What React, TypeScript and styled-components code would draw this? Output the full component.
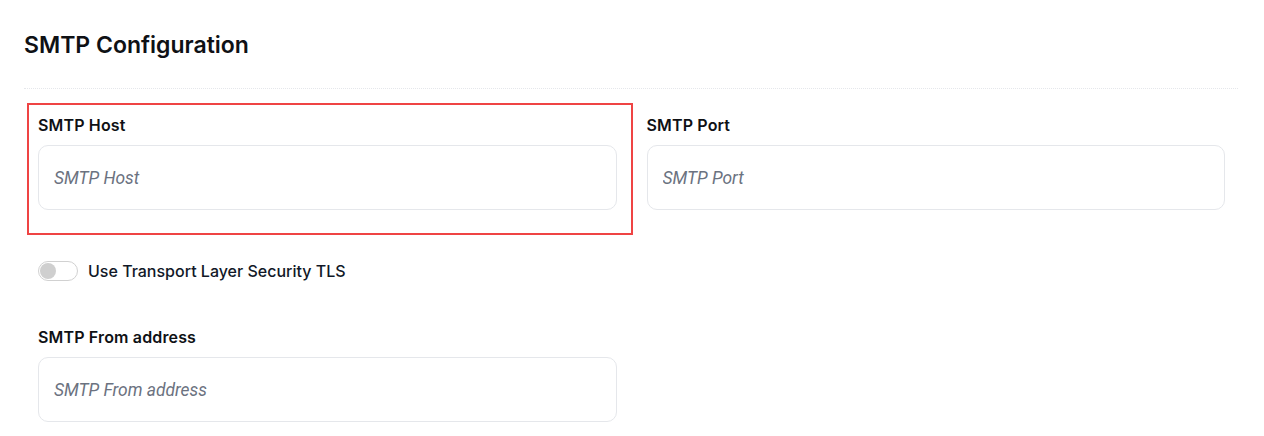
import styled, { createGlobalStyle } from "styled-components"

const GlobalStyle = createGlobalStyle`
  body {
    margin: 0;
    background: #fff;
    font-family: Inter, "Noto Sans", sans-serif;
    color: #111827;
  }
`

const Page = styled.div`
  padding: 29px 26px 0 24px;
`

const Title = styled.h2`
  margin: 0;
  font-size: 23px;
  line-height: 32px;
  font-weight: 600;
  color: #0f1115;
`

const Divider = styled.hr`
  margin: 27px 0 0;
  border: 0;
  border-top: 1px dotted #e5e7eb;
`

const Form = styled.div`
  display: flex;
  flex-direction: column;
  padding: 24px 13px 0 14px;
`

const Row = styled.div`
  display: grid;
  grid-template-columns: 1fr 1fr;
  column-gap: 30px;
`

const Field = styled.div<{ $highlight?: boolean; $half?: boolean }>`
  position: relative;
  display: flex;
  flex-direction: column;
  gap: 8px;
  width: ${(p) => (p.$half ? "579px" : "auto")};

  ${(p) =>
    p.$highlight &&
    `
    &::after {
      content: "";
      position: absolute;
      top: -10px;
      left: -11px;
      right: -16px;
      bottom: -25px;
      border: 2px solid #ef4444;
      pointer-events: none;
    }
  `}
`

const Label = styled.label`
  font-size: 16px;
  line-height: 24px;
  font-weight: 600;
  letter-spacing: 0.15px;
  color: #0f1115;
`

const Input = styled.input`
  box-sizing: border-box;
  width: 100%;
  height: 65px;
  padding: 0 15px;
  border: 1px solid #e5e7eb;
  border-radius: 10px;
  background: #fff;
  font-family: Roboto, "Liberation Sans", sans-serif;
  font-size: 17.4px;
  color: #111827;
  outline: none;

  &::placeholder {
    color: #6b7280;
    font-style: italic;
  }
`

const ToggleRow = styled.label`
  display: flex;
  align-items: center;
  gap: 10px;
  margin: 49px 0 42px;
  font-size: 16px;
  line-height: 24px;
  font-weight: 500;
  color: #111827;
`

const Track = styled.span`
  position: relative;
  box-sizing: border-box;
  width: 40px;
  height: 20px;
  border: 1px solid #d1d1d1;
  border-radius: 10px;
  background: #fff;
  flex-shrink: 0;
`

const Knob = styled.span`
  position: absolute;
  top: 1px;
  left: 1px;
  width: 16px;
  height: 16px;
  border-radius: 50%;
  background: #cfcfcf;
`

export default function App() {
  return (
    <>
      <GlobalStyle />
      <Page>
        <Title>SMTP Configuration</Title>
        <Divider />
        <Form>
          <Row>
            <Field $highlight>
              <Label>SMTP Host</Label>
              <Input placeholder="SMTP Host" />
            </Field>
            <Field>
              <Label>SMTP Port</Label>
              <Input placeholder="SMTP Port" />
            </Field>
          </Row>
          <ToggleRow>
            <Track>
              <Knob />
            </Track>
            Use Transport Layer Security TLS
          </ToggleRow>
          <Field $half>
            <Label>SMTP From address</Label>
            <Input placeholder="SMTP From address" />
          </Field>
        </Form>
      </Page>
    </>
  )
}
